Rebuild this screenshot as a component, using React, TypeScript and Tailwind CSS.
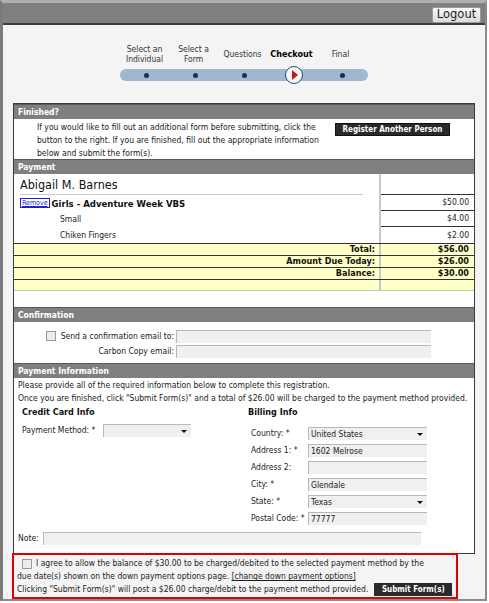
import React from 'react';

const steps = [
  { label: ['Select an', 'Individual'] },
  { label: ['Select a', 'Form'] },
  { label: ['Questions'] },
  { label: ['Checkout'], active: true },
  { label: ['Final'] },
];

const SectionHeader: React.FC<{ title: string }> = ({ title }) => (
  <div className="h-[15px] bg-[#7f7f7f] border-t border-[#5a5a5a] flex items-center pl-[4px] text-white font-bold text-[8.5px]">
    {title}
  </div>
);

const Field: React.FC<{ value?: string; select?: boolean; w: string }> = ({ value, select, w }) => (
  <div className={`${w} h-[13px] bg-[#f0f0f0] border-t border-l border-[#b8b8b8] flex items-center pl-[2px] relative text-[8.5px] text-[#222]`}>
    {value}
    {select && (
      <span className="absolute right-[4px] top-[5px] w-0 h-0 border-l-[3px] border-r-[3px] border-t-[3px] border-l-transparent border-r-transparent border-t-[#111]" />
    )}
  </div>
);

const BillingRow: React.FC<{ label: string; value?: string; select?: boolean }> = ({ label, value, select }) => (
  <div className="flex items-center h-[17px]">
    <div className="w-[60px] pl-[3px]">{label}</div>
    <Field w="w-[119px]" value={value} select={select} />
  </div>
);

export default function App() {
  return (
    <div className="w-[489px] h-[603px] bg-white overflow-hidden font-['DejaVu_Sans_Condensed','DejaVu_Sans',sans-serif] text-[8.5px] leading-[13px] text-[#222]">
      <div className="w-[487px] h-[601px] border-l-[3px] border-t-[3px] border-r-[2px] border-b-[2px] border-l-[#7b7b7b] border-t-[#b0b0b0] border-r-[#8a8a8a] border-b-[#8a8a8a] bg-[#f4f4f4] flex flex-col">
        {/* top bar */}
        <div className="h-[23px] bg-[#808080] border-b-2 border-[#3d3d3d] flex items-center justify-end pr-[4px]">
          <div className="w-[49px] h-[16px] mt-[3px] rounded-[2px] border border-[#9a9a9a] bg-gradient-to-b from-[#fafafa] to-[#dcdcdc] flex items-center justify-center text-[11.5px] text-[#222] font-['DejaVu_Sans','Liberation_Sans',sans-serif]">
            Logout
          </div>
        </div>

        {/* progress */}
        <div className="h-[80px] pt-[17px] pl-[117px]">
          <div className="flex w-[245px]">
            {steps.map((s, i) => (
              <div key={i} className={`w-[49px] h-[24px] flex flex-col items-center justify-center leading-[10px] text-center ${s.active ? 'font-bold text-[9px] text-black' : 'text-[8.5px] text-[#333]'}`}>
                {s.label.map((l) => (
                  <span key={l} className="whitespace-nowrap">{l}</span>
                ))}
              </div>
            ))}
          </div>
          <div className="mt-[3px] w-[248px] h-[12px] rounded-full bg-[#a1b7d0] flex items-center pl-[2px]">
            {steps.map((s, i) => (
              <div key={i} className="w-[49px] flex justify-center">
                {s.active ? (
                  <div className="w-[18px] h-[18px] rounded-full border-[1.5px] border-[#2b4a78] bg-[#f6f6f6] flex items-center justify-center">
                    <span className="ml-[2px] w-0 h-0 border-t-[5px] border-b-[5px] border-l-[6px] border-t-transparent border-b-transparent border-l-[#c8161d]" />
                  </div>
                ) : (
                  <div className="w-[5px] h-[5px] rounded-full bg-[#14325f]" />
                )}
              </div>
            ))}
          </div>
        </div>

        {/* main panel */}
        <div className="ml-[10px] w-[462px] bg-white border border-[#3a3a3a]">
          <SectionHeader title="Finished?" />
          <div className="h-[40px] flex pt-[2px] pl-[23px]">
            <div className="w-[290px]">
              If you would like to fill out an additional form before submitting, click the button to the right. If you are finished, fill out the appropriate information below and submit the form(s).
            </div>
            <div className="ml-[8px] mt-[2px] w-[115px] h-[13px] bg-[#2a2a2a] border border-[#111] text-white font-bold text-[8px] flex items-center justify-center">
              Register Another Person
            </div>
          </div>

          <SectionHeader title="Payment" />
          <div className="flex">
            <div className="w-[367px] border-r-2 border-[#c8c8c8]">
              <div className="h-[21px] mx-[6px] border-b border-[#c8c8c8] flex items-end pb-[1px] text-[12.5px] leading-[16px] text-[#111] w-[343px]">
                Abigail M. Barnes
              </div>
              <div className="h-[16px] flex items-center pl-[6px]">
                <span className="border border-[#2020d0] text-[#2020d0] underline text-[7px] leading-[8px] px-[1px]">Remove</span>
                <span className="ml-[2px] font-bold text-[9.5px] text-[#111]">Girls - Adventure Week VBS</span>
              </div>
              <div className="h-[16px] flex items-center pl-[46px]">Small</div>
              <div className="h-[16px] flex items-center pl-[46px]">Chiken Fingers</div>
            </div>
            <div className="flex-1">
              <div className="h-[21px] border-b border-[#333]" />
              <div className="h-[16px] border-b border-[#333] flex items-center justify-end pr-[5px]">$50.00</div>
              <div className="h-[16px] border-b border-[#333] flex items-center justify-end pr-[5px]">$4.00</div>
              <div className="h-[16px] flex items-center justify-end pr-[5px]">$2.00</div>
            </div>
          </div>
          {[
            ['Total:', '$56.00'],
            ['Amount Due Today:', '$26.00'],
            ['Balance:', '$30.00'],
            ['', ''],
          ].map(([l, v], i) => (
            <div key={i} className={`flex h-[12px] bg-[#ffffc8] border-t border-[#333] font-bold text-[9px] text-[#111] leading-[11px] ${i === 3 ? 'border-b border-b-[#c8c8a0]' : ''}`}>
              <div className="w-[367px] border-r-2 border-[#c8c8c8] text-right pr-[4px]">{l}</div>
              <div className="flex-1 text-right pr-[5px]">{v}</div>
            </div>
          ))}
          <div className="h-[16px]" />

          <SectionHeader title="Confirmation" />
          <div className="h-[41px] pt-[6px]">
            <div className="flex items-center h-[16px]">
              <div className="w-[162px] flex items-center justify-end pr-[2px]">
                <span className="w-[10px] h-[10px] border border-[#9a9a9a] bg-[#ececec] mr-[5px]" />
                Send a confirmation email to:
              </div>
              <Field w="w-[255px]" />
            </div>
            <div className="flex items-center h-[14px]">
              <div className="w-[162px] text-right pr-[2px]">Carbon Copy email:</div>
              <Field w="w-[255px]" />
            </div>
          </div>

          <SectionHeader title="Payment Information" />
          <div className="pl-[4px] pt-[1px]">
            <div>Please provide all of the required information below to complete this registration.</div>
            <div>Once you are finished, click "Submit Form(s)" and a total of $26.00 will be charged to the payment method provided.</div>
          </div>
          <div className="flex pl-[8px] pt-[1px]">
            <div className="w-[226px]">
              <div className="font-bold text-[9px] text-[#111] h-[14px]">Credit Card Info</div>
              <div className="flex items-center h-[15px] mt-[3px]">
                <div className="w-[81px]">Payment Method: *</div>
                <Field w="w-[88px]" select />
              </div>
            </div>
            <div>
              <div className="font-bold text-[9px] text-[#111] h-[14px]">Billing Info</div>
              <div className="pt-[5px]">
                <BillingRow label="Country: *" value="United States" select />
                <BillingRow label="Address 1: *" value="1602 Melrose" />
                <BillingRow label="Address 2:" />
                <BillingRow label="City: *" value="Glendale" />
                <BillingRow label="State: *" value="Texas" select />
                <BillingRow label="Postal Code: *" value="77777" />
              </div>
            </div>
          </div>
          <div className="flex items-center h-[16px] mt-[3px] mb-[7px] pl-[4px]">
            <div className="w-[25px]">Note:</div>
            <Field w="w-[378px]" />
          </div>
        </div>

        {/* agreement */}
        <div className="ml-[9px] mt-[-1px] w-[446px] h-[47px] border-2 border-[#e00000] pl-[3px] pt-[2px] leading-[13px]">
          <div className="flex items-center">
            <span className="w-[10px] h-[10px] border border-[#9a9a9a] bg-[#ececec] mr-[4px] ml-[5px]" />
            I agree to allow the balance of $30.00 to be charged/debited to the selected payment method by the
          </div>
          <div>
            due date(s) shown on the down payment options page. <span className="underline">[change down payment options]</span>
          </div>
          <div className="flex items-center">
            Clicking "Submit Form(s)" will post a $26.00 charge/debit to the payment method provided.
            <span className="ml-[6px] w-[78px] h-[13px] bg-[#2a2a2a] text-white font-bold text-[8px] flex items-center justify-center">Submit Form(s)</span>
          </div>
        </div>
      </div>
    </div>
  );
}
